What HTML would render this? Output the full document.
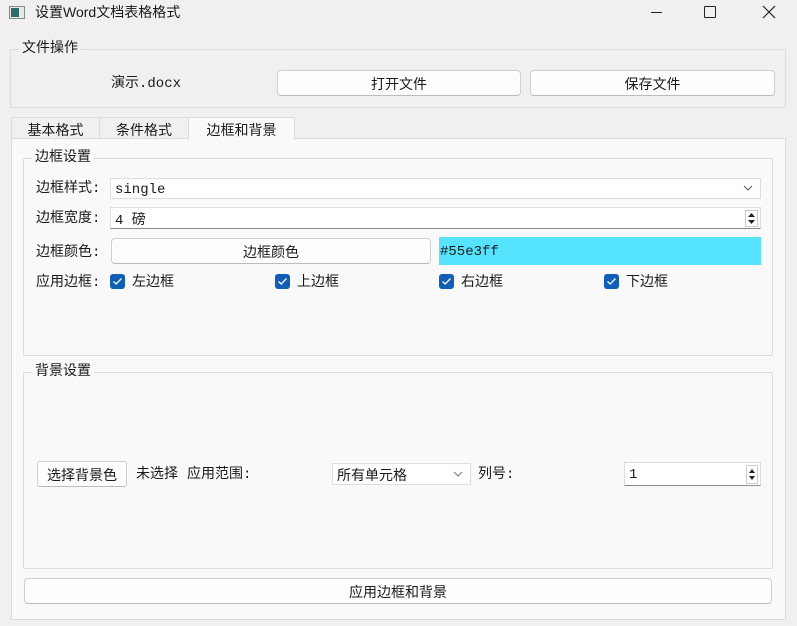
<!DOCTYPE html>
<html><head><meta charset="utf-8"><style>
*{box-sizing:border-box;margin:0;padding:0}
body{width:797px;height:626px;background:#f0f0f0;position:relative;overflow:hidden;font-family:"Liberation Mono","Noto Sans CJK SC",monospace;font-size:14px;color:#1a1a1a}
.a{position:absolute;white-space:nowrap;line-height:1}
.grp{position:absolute;border:1px solid #dcdcdc;border-radius:2px}
.gt{position:absolute;background:inherit;padding:0 3px;line-height:1;font-size:14px}
.btn{position:absolute;background:#fdfdfd;border:1px solid #d0d0d0;border-bottom-color:#bcbcbc;border-radius:4px;text-align:center;display:flex;align-items:center;justify-content:center;padding-top:2px}
.field{position:absolute;background:#fff;border:1px solid #dedede;border-bottom:1px solid #8a8a8a;display:flex;align-items:center;padding-left:4px;padding-top:2px}
.cb{position:absolute;width:15px;height:15px;background:#0f5fb8;border-radius:3px}
.cb svg{position:absolute;left:2px;top:3px}
.tab{position:absolute;top:117px;height:22px;border:1px solid #dcdcdc;border-bottom:none;display:flex;align-items:center;justify-content:center;background:#f0f0f0;padding-top:2px}
</style></head><body>
<div class="a" style="left:9px;top:6px;width:16px;height:13px;border:1px solid #8a8a8a;background:#e8e8e8"><div style="position:absolute;left:1px;top:1px;width:8px;height:9px;background:#2e6e6a"></div></div>
<div class="a" style="left:35px;top:5px;font-family:'Liberation Sans','Noto Sans CJK SC',sans-serif;font-size:14px">设置Word文档表格格式</div>
<div class="a" style="left:651px;top:12px;width:11px;height:1px;background:#222"></div>
<div class="a" style="left:704px;top:6px;width:12px;height:12px;border:1px solid #222;border-radius:1px"></div>
<svg class="a" style="left:762px;top:5px" width="14" height="14"><path d="M1 1L13 13M13 1L1 13" stroke="#222" stroke-width="1.2"/></svg>
<div class="grp" style="left:10px;top:49px;width:776px;height:59px;background:#f0f0f0"></div>
<div class="gt a" style="left:19px;top:42px;background:#f0f0f0">文件操作</div>
<div class="a" style="left:111px;top:77px">演示.docx</div>
<div class="btn" style="left:277px;top:70px;width:244px;height:26px">打开文件</div>
<div class="btn" style="left:530px;top:70px;width:245px;height:26px">保存文件</div>
<div class="tab" style="left:11px;width:89px">基本格式</div>
<div class="tab" style="left:99px;width:90px">条件格式</div>
<div class="tab" style="left:188px;width:107px;background:#f9f9f9;height:23px;z-index:2">边框和背景</div>
<div class="a" style="left:11px;top:138px;width:775px;height:482px;background:#f9f9f9;border:1px solid #dcdcdc"></div>
<div class="grp" style="left:23px;top:158px;width:750px;height:198px;background:#f9f9f9"></div>
<div class="gt a" style="left:32px;top:151px;background:#f9f9f9">边框设置</div>
<div class="a" style="left:36px;top:182px">边框样式:</div>
<div class="field" style="left:110px;top:178px;width:651px;height:21px;border-bottom-color:#dedede">single<svg style="position:absolute;right:7px;top:6px" width="10" height="7"><path d="M1 1L5 5L9 1" stroke="#555" fill="none"/></svg></div>
<div class="a" style="left:36px;top:212px">边框宽度:</div>
<div class="field" style="left:110px;top:207px;width:651px;height:22px">4 磅
<div style="position:absolute;right:2px;top:2px;width:13px;height:17px;border:1px solid #ccc;background:#fff"><svg width="11" height="15"><path d="M2 6L5.5 2L9 6Z M2 9L5.5 13L9 9Z" fill="#222"/></svg></div></div>
<div class="a" style="left:36px;top:246px">边框颜色:</div>
<div class="btn" style="left:111px;top:238px;width:320px;height:26px">边框颜色</div>
<div class="a" style="left:439px;top:237px;width:322px;height:28px;background:#55e3ff;display:flex;align-items:center;padding-left:1px;padding-top:2px">#55e3ff</div>
<div class="a" style="left:36px;top:276px">应用边框:</div>
<div class="cb" style="left:110px;top:274px"><svg width="11" height="9"><path d="M1.5 4.5L4.2 7L9.5 1.5" stroke="#fff" stroke-width="1.3" fill="none"/></svg></div><div class="a" style="left:132px;top:276px">左边框</div>
<div class="cb" style="left:275px;top:274px"><svg width="11" height="9"><path d="M1.5 4.5L4.2 7L9.5 1.5" stroke="#fff" stroke-width="1.3" fill="none"/></svg></div><div class="a" style="left:297px;top:276px">上边框</div>
<div class="cb" style="left:439px;top:274px"><svg width="11" height="9"><path d="M1.5 4.5L4.2 7L9.5 1.5" stroke="#fff" stroke-width="1.3" fill="none"/></svg></div><div class="a" style="left:461px;top:276px">右边框</div>
<div class="cb" style="left:604px;top:274px"><svg width="11" height="9"><path d="M1.5 4.5L4.2 7L9.5 1.5" stroke="#fff" stroke-width="1.3" fill="none"/></svg></div><div class="a" style="left:626px;top:276px">下边框</div>
<div class="grp" style="left:23px;top:372px;width:750px;height:197px;background:#f9f9f9"></div>
<div class="gt a" style="left:32px;top:365px;background:#f9f9f9">背景设置</div>
<div class="btn" style="left:37px;top:461px;width:90px;height:26px;border-radius:3px">选择背景色</div>
<div class="a" style="left:136px;top:468px">未选择</div>
<div class="a" style="left:187px;top:468px">应用范围:</div>
<div class="field" style="left:332px;top:463px;width:139px;height:22px;border-bottom-color:#dedede">所有单元格<svg style="position:absolute;right:7px;top:7px" width="10" height="7"><path d="M1 1L5 5L9 1" stroke="#777" fill="none"/></svg></div>
<div class="a" style="left:478px;top:468px">列号:</div>
<div class="field" style="left:624px;top:462px;width:137px;height:24px">1
<div style="position:absolute;right:2px;top:2px;width:12px;height:19px;border:1px solid #ccc;background:#fff"><svg width="10" height="17"><path d="M2 7L5 3L8 7Z M2 10L5 14L8 10Z" fill="#222"/></svg></div></div>
<div class="btn" style="left:24px;top:578px;width:748px;height:26px">应用边框和背景</div>
</body></html>
